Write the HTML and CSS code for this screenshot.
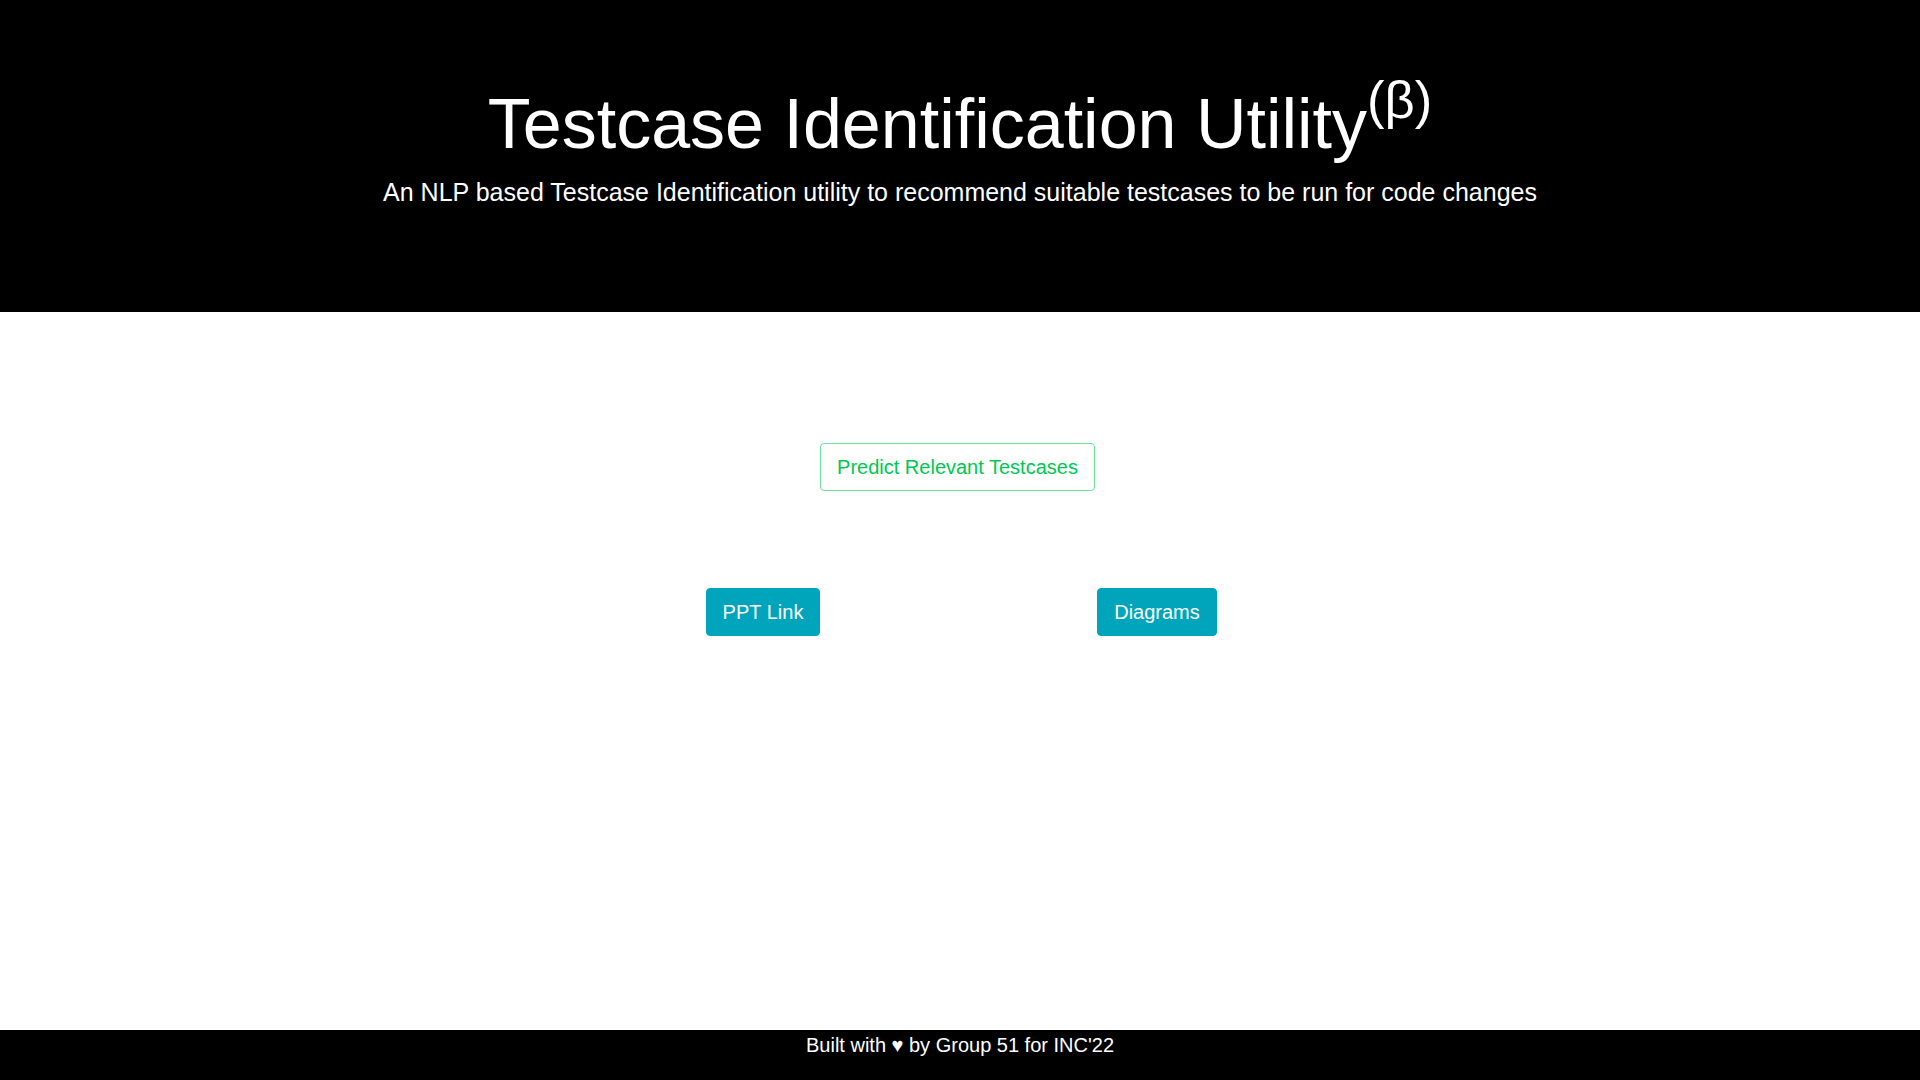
FILE: index.html
```html
<!DOCTYPE html>
<html lang="en">
<head>
<meta charset="utf-8">
<title>Testcase Identification Utility</title>
<link rel="stylesheet" href="styles.css">
</head>
<body>
<div class="page">
  <header class="hero">
    <h1 class="title">Testcase Identification Utility<sup class="beta">(β)</sup></h1>
    <p class="lead">An NLP based Testcase Identification utility to recommend suitable testcases to be run for code changes</p>
  </header>
  <main class="main">
    <div class="predict-row">
      <button class="btn btn-outline-success">Predict Relevant Testcases</button>
    </div>
    <div class="link-row">
      <div class="link-col"><button class="btn btn-info">PPT Link</button></div>
      <div class="link-col"><button class="btn btn-info">Diagrams</button></div>
    </div>
  </main>
  <footer class="footer">Built with ♥ by Group 51 for INC'22</footer>
</div>
</body>
</html>
```
FILE: styles.css
```css
* { box-sizing: border-box; }
html, body { margin: 0; padding: 0; height: 100%; }
body {
  font-family: "Liberation Sans", Arial, sans-serif;
  background: #fff;
  color: #212529;
}
.page {
  display: flex;
  flex-direction: column;
  height: 1080px;
}
.hero {
  background: #000;
  color: #fff;
  height: 312px;
  padding-top: 82px;
  text-align: center;
}
.title {
  margin: 0 0 8px;
  font-size: 70px;
  font-weight: 400;
  line-height: 84px;
}
.beta {
  font-size: 75%;
  line-height: 0;
  position: relative;
  vertical-align: baseline;
  top: -0.58em;
}
.lead {
  margin: 0;
  font-size: 25px;
  line-height: 36px;
}
.main {
  flex: 1;
  padding-top: 131px;
}
.predict-row {
  display: flex;
  justify-content: center;
  padding-right: 5px;
}
.link-row {
  display: grid;
  grid-template-columns: 394px 394px;
  justify-content: center;
  margin-top: 97px;
}
.link-col {
  display: flex;
  justify-content: center;
}
.btn {
  font-family: "Liberation Sans", Arial, sans-serif;
  font-size: 20px;
  line-height: 30px;
  padding: 8px 16px;
  border-radius: 4px;
  border: 1px solid transparent;
  cursor: pointer;
}
.btn-outline-success {
  background: #fff;
  color: #00c851;
  border-color: #6ee09a;
}
.btn-info {
  background: #00a5bb;
  color: #fff;
  border-color: #00a5bb;
}
.footer {
  background: #000;
  color: #fff;
  height: 50px;
  font-size: 20px;
  line-height: 31px;
  text-align: center;
}
```
